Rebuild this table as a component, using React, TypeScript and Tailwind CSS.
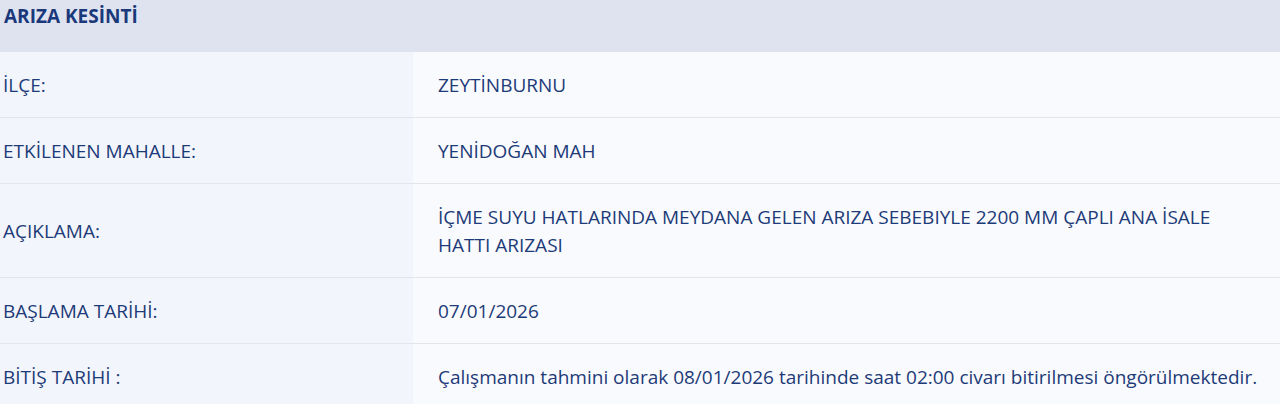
import React from 'react';

type Row = { label: string; value: string };

const rows: Row[] = [
  { label: 'İLÇE:', value: 'ZEYTİNBURNU' },
  { label: 'ETKİLENEN MAHALLE:', value: 'YENİDOĞAN MAH' },
  {
    label: 'AÇIKLAMA:',
    value: 'İÇME SUYU HATLARINDA MEYDANA GELEN ARIZA SEBEBIYLE 2200 MM ÇAPLI ANA İSALE HATTI ARIZASI',
  },
  { label: 'BAŞLAMA TARİHİ:', value: '07/01/2026' },
  {
    label: 'BİTİŞ TARİHİ :',
    value: 'Çalışmanın tahmini olarak 08/01/2026 tarihinde saat 02:00 civarı bitirilmesi öngörülmektedir.',
  },
];

const App: React.FC = () => {
  return (
    <div
      className="w-[1280px] h-[404px] overflow-hidden bg-[#f9fafd] text-[19px] leading-[28px] font-medium text-[#1d3b78]"
      style={{ fontFamily: '"Open Sans", "Noto Sans", sans-serif' }}
    >
      <div className="h-[52px] bg-[#dfe3f0] pl-[4px] pt-[2px] font-bold text-[#1a397b]">ARIZA KESİNTİ</div>
      {rows.map((r, i) => (
        <div key={r.label} className={`flex ${i < rows.length - 1 ? 'border-b border-[#e3e5eb]' : ''}`}>
          <div className="w-[413px] shrink-0 bg-[#f3f5fc] pl-[3px] flex items-center">{r.label}</div>
          <div className="flex-1 pl-[25px] pr-4 pt-[19px] pb-[18px]">{r.value}</div>
        </div>
      ))}
    </div>
  );
};

export default App;
